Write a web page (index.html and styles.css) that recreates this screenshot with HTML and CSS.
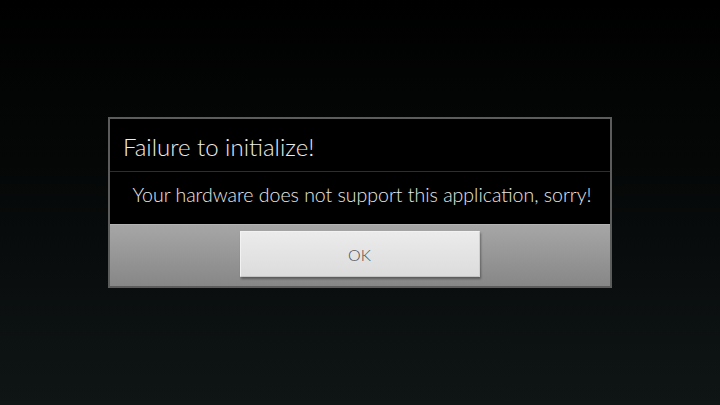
FILE: index.html
```html
<!DOCTYPE html>
<html>
<head>
<meta charset="utf-8">
<link rel="stylesheet" href="styles.css">
</head>
<body>
<div class="screen">
  <div class="dialog">
    <div class="title">Failure to initialize!</div>
    <div class="message">Your hardware does not support this application, sorry!</div>
    <div class="buttons">
      <button class="ok">OK</button>
    </div>
  </div>
</div>
</body>
</html>
```
FILE: styles.css
```css
html, body {
  margin: 0;
  padding: 0;
  width: 720px;
  height: 405px;
  overflow: hidden;
}
body {
  background: linear-gradient(to bottom, #000000 0%, #050707 40%, #0f1515 100%);
  font-family: Lato, "Open Sans", sans-serif;
  font-weight: 300;
}
.screen {
  width: 720px;
  height: 405px;
  display: flex;
  align-items: center;
  justify-content: center;
}
.dialog {
  width: 500px;
  border: 2px solid #5c5c5c;
  background: #000;
  display: flex;
  flex-direction: column;
}
.title {
  height: 53px;
  border-bottom: 1px solid #2e2e2e;
  display: flex;
  align-items: center;
  padding: 2px 0 0 13px;
  box-sizing: border-box;
  color: #ececec;
  font-size: 24px;
}
.message {
  height: 52px;
  display: flex;
  align-items: center;
  justify-content: center;
  color: #e8e8e8;
  font-size: 19.5px;
  padding: 0 0 8px 4px;
  box-sizing: border-box;
}
.buttons {
  height: 62px;
  background: linear-gradient(to bottom, #a6a6a6, #878787);
  border-top: 1px solid #b4b4b4;
  display: flex;
  justify-content: center;
  align-items: flex-start;
  padding-top: 6px;
  box-sizing: border-box;
}
.ok {
  width: 240px;
  height: 46px;
  margin-left: -1px;
  border: 1px solid #f2f2f2;
  border-right-color: #cfcfcf;
  border-bottom-color: #c4c4c4;
  background: linear-gradient(to bottom, #ebebeb, #dcdcdc);
  box-shadow: 1px 2px 2px rgba(0, 0, 0, 0.35);
  font-family: Lato, "Open Sans", sans-serif;
  font-weight: 300;
  font-size: 16px;
  color: #505050;
  padding: 0;
}
```
